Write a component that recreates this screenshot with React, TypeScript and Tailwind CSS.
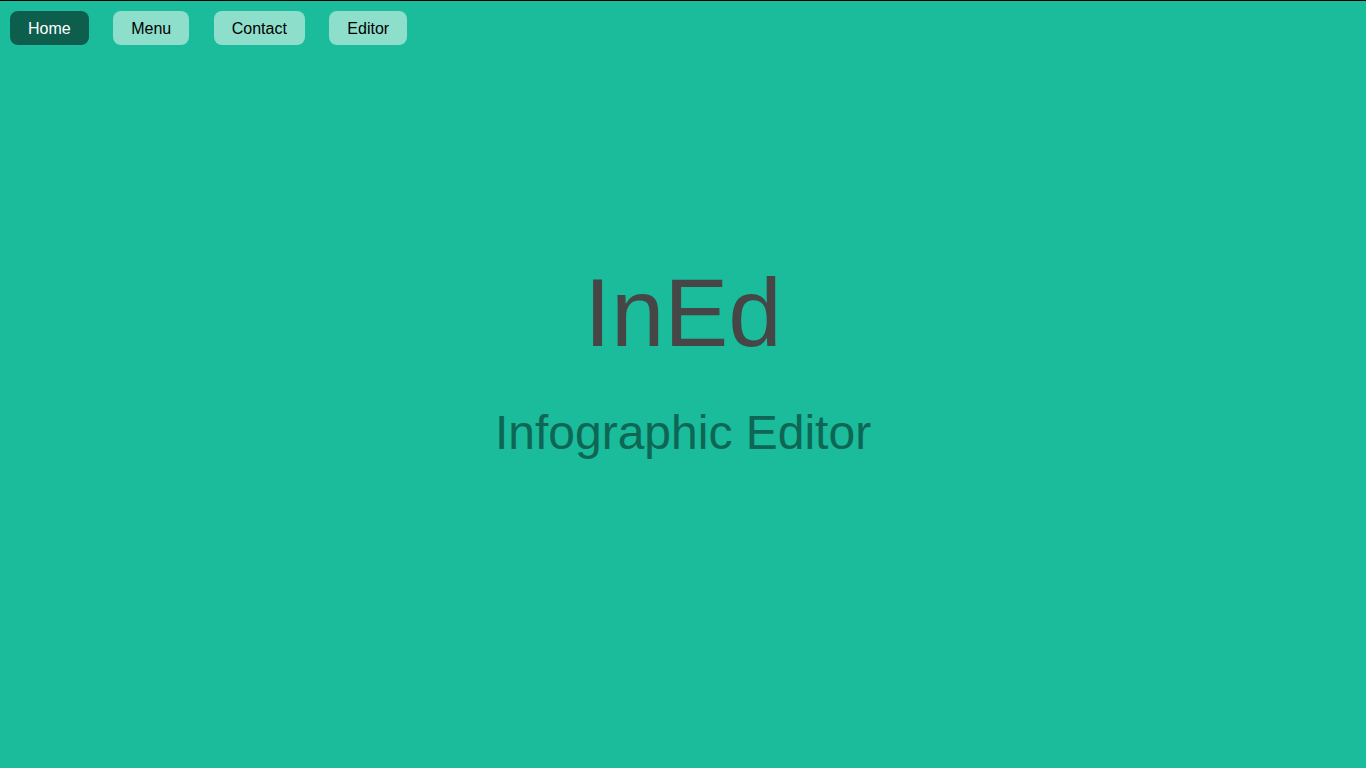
import React from 'react';

const links = ['Home', 'Menu', 'Contact', 'Editor'];

export default function App() {
  const current = 'Home';

  return (
    <div
      className="min-h-screen bg-[#1abc9c] border-t border-black"
      style={{ fontFamily: '"Liberation Sans", Arial, sans-serif' }}
    >
      {/* Top nav */}
      <nav className="flex items-center gap-[24.5px] pt-[10px] pl-[10px]">
        {links.map(link => (
          <button
            key={link}
            className={`h-[34px] px-[18px] pt-[2px] rounded-lg text-base ${
              link === current
                ? 'bg-[#0e5e4e] text-white'
                : 'bg-[#8ddfcc] text-black'
            }`}
          >
            {link}
          </button>
        ))}
      </nav>

      {/* Title */}
      <div className="flex flex-col items-center pt-[220px]">
        <h1 className="text-[96px] leading-none text-[#464646]">InEd</h1>
        <h2 className="mt-[48px] text-[48px] leading-none text-[#0e6655]">Infographic Editor</h2>
      </div>
    </div>
  );
}
